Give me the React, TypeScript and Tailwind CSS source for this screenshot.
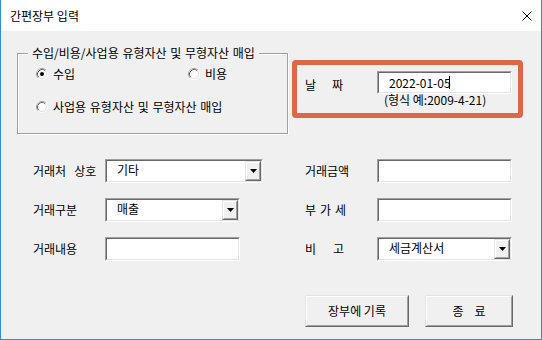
import React from 'react'

const Radio = ({ checked }: { checked?: boolean }) => (
    <svg width="12" height="12" viewBox="0 0 12 12" className="shrink-0">
        <circle cx="6" cy="6" r="4.5" fill="#fff" />
        <path d="M2.11 9.89 A5.5 5.5 0 0 1 9.89 2.11" fill="none" stroke="#a0a0a0" />
        <path d="M9.89 2.11 A5.5 5.5 0 0 1 2.11 9.89" fill="none" stroke="#ffffff" />
        <path d="M2.82 9.18 A4.5 4.5 0 0 1 9.18 2.82" fill="none" stroke="#696969" />
        <path d="M9.18 2.82 A4.5 4.5 0 0 1 2.82 9.18" fill="none" stroke="#e3e3e3" />
        {checked && <circle cx="6" cy="6" r="2" fill="#000" />}
    </svg>
)

type BoxProps = {
    className: string;
    children?: React.ReactNode;
}

// sunken edit box, windows classic look
const Sunken = ({ className, children }: BoxProps) => (
    <div className={`border border-t-[#a0a0a0] border-l-[#a0a0a0] border-b-white border-r-white ${className}`}>
        <div className="h-full flex items-center border border-t-[#696969] border-l-[#696969] border-b-[#e3e3e3] border-r-[#e3e3e3] bg-white">
            {children}
        </div>
    </div>
)

const Arrow = () => (
    <div className="w-[16px] h-full border border-t-[#e3e3e3] border-l-[#e3e3e3] border-b-[#696969] border-r-[#696969]">
        <div className="h-full flex items-center justify-center bg-[#f0f0f0] border border-t-white border-l-white border-b-[#a0a0a0] border-r-[#a0a0a0]">
            <svg width="7" height="4" viewBox="0 0 7 4">
                <polygon points="0,0 7,0 3.5,4" fill="#000" />
            </svg>
        </div>
    </div>
)

const Combo = ({ className, value }: { className: string; value: string }) => (
    <Sunken className={className}>
        <span className="flex-1 pl-[10px] pb-[2px]">{value}</span>
        <Arrow />
    </Sunken>
)

const Button = ({ className, children }: BoxProps) => (
    <div className={`border border-t-[#e3e3e3] border-l-[#e3e3e3] border-b-[#696969] border-r-[#696969] ${className}`}>
        <div className="h-full flex items-center justify-center bg-[#f0f0f0] border border-t-white border-l-white border-b-[#a0a0a0] border-r-[#a0a0a0]">
            {children}
        </div>
    </div>
)

const Field = ({ label, children }: { label: React.ReactNode; children: React.ReactNode }) => (
    <div className="h-[24px] flex items-center">
        <div className="w-[72px] flex">{label}</div>
        {children}
    </div>
)

export default function App() {
    return (
        <div className="w-[542px] h-[340px] flex flex-col border-x border-b border-[#2f8fd5] bg-[#f0f0f0] font-['Noto_Sans_CJK_KR',sans-serif] text-[12px] leading-none text-black">
            <div className="h-[31px] shrink-0 bg-white flex items-center justify-between pl-[9px] pr-[9px]">
                <span>간편장부 입력</span>
                <svg width="10" height="10" viewBox="0 0 10 10">
                    <path d="M0.5 0.5 L9.5 9.5 M9.5 0.5 L0.5 9.5" stroke="#000" strokeWidth="1" />
                </svg>
            </div>

            <div className="flex-1 pl-[16px] pt-[22px]">
                <div className="flex items-start gap-[4px]">
                    <div className="relative w-[271px] h-[81px] border border-[#a0a0a0] shadow-[1px_1px_0_#fff,inset_1px_1px_0_#fff] pl-[18px] pt-[14px] [word-spacing:1px]">
                        <span className="absolute left-[10px] -top-[7px] px-[4px] bg-[#f0f0f0] leading-[12px]">
                            수입/비용/사업용 유형자산 및 무형자산 매입
                        </span>
                        <div className="h-[12px] flex items-center">
                            <div className="w-[152px] flex items-center gap-[5px]">
                                <Radio checked />
                                <span>수입</span>
                            </div>
                            <div className="flex items-center gap-[5px]">
                                <Radio />
                                <span>비용</span>
                            </div>
                        </div>
                        <div className="h-[12px] mt-[21px] flex items-center gap-[5px]">
                            <Radio />
                            <span>사업용 유형자산 및 무형자산 매입</span>
                        </div>
                    </div>

                    <div className="mt-[7px] w-[231px] h-[58px] border-[5px] border-[#dc6848] rounded-[4px] pt-[6px] pl-[8px] flex">
                        <div className="w-[72px] h-[23px] flex items-center gap-[16px] pt-[4px]">
                            <span>날</span>
                            <span>짜</span>
                        </div>
                        <div className="flex flex-col">
                            <Sunken className="w-[135px] h-[23px]">
                                <span className="pl-[10px]">2022-01-05</span>
                                <span className="w-px h-[13px] bg-black -ml-[2px]" />
                            </Sunken>
                            <span className="ml-[7px] leading-[12px]">(형식 예:2009-4-21)</span>
                        </div>
                    </div>
                </div>

                <div className="mt-[25px] pl-[16px] grid grid-cols-[272px_1fr] gap-y-[15px]">
                    <Field label={<><span>거래처</span><span className="ml-[8px]">상호</span></>}>
                        <Combo className="w-[158px] h-[24px]" value="기타" />
                    </Field>
                    <Field label={<span>거래금액</span>}>
                        <Sunken className="w-[135px] h-[24px]" />
                    </Field>
                    <Field label={<span>거래구분</span>}>
                        <Combo className="w-[135px] h-[24px]" value="매출" />
                    </Field>
                    <Field label={<div className="flex gap-[4px]"><span>부</span><span>가</span><span>세</span></div>}>
                        <Sunken className="w-[135px] h-[24px]" />
                    </Field>
                    <Field label={<span>거래내용</span>}>
                        <Sunken className="w-[135px] h-[24px]" />
                    </Field>
                    <Field label={<div className="flex gap-[17px]"><span>비</span><span>고</span></div>}>
                        <Combo className="w-[135px] h-[24px]" value="세금계산서" />
                    </Field>
                </div>

                <div className="mt-[34px] pl-[288px] flex gap-[16px]">
                    <Button className="w-[104px] h-[32px]">장부에 기록</Button>
                    <Button className="w-[88px] h-[32px]">
                        <span>종</span>
                        <span className="ml-[11px]">료</span>
                    </Button>
                </div>
            </div>
        </div>
    )
}
